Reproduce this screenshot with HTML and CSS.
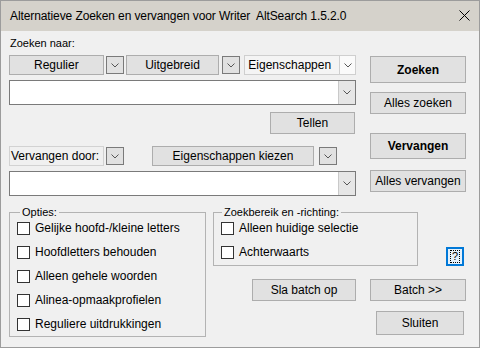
FILE: index.html
```html
<!DOCTYPE html>
<html lang="nl">
<head>
  <meta charset="UTF-8">
  <title>AltSearch</title>
  <link rel="stylesheet" href="styles.css">
</head>
<body>
  <div class="window">
    <div class="titlebar">
      <span class="title">Alternatieve Zoeken en vervangen voor Writer&nbsp; AltSearch 1.5.2.0</span>
      <svg class="close" width="11" height="11" viewBox="0 0 11 11">
        <path d="M0.5 0.5 L10.5 10.5 M10.5 0.5 L0.5 10.5" stroke="#000" stroke-width="1" fill="none"/>
      </svg>
    </div>

    <div class="content">
      <div class="top">
        <div class="left">
          <div class="label">Zoeken naar:</div>

          <div class="row">
            <button class="btn mode">Regulier</button>
            <span class="drop"><svg width="8" height="5" viewBox="0 0 8 5"><polyline points="0.5,0.5 4,4 7.5,0.5" fill="none" stroke="#555"/></svg></span>
            <button class="btn mode mode-ext">Uitgebreid</button>
            <span class="drop drop-ext"><svg width="8" height="5" viewBox="0 0 8 5"><polyline points="0.5,0.5 4,4 7.5,0.5" fill="none" stroke="#555"/></svg></span>
            <div class="prop-combo">
              <span class="prop-text">Eigenschappen</span>
              <span class="prop-arrow"><svg width="8" height="5" viewBox="0 0 8 5"><polyline points="0.5,0.5 4,4 7.5,0.5" fill="none" stroke="#555"/></svg></span>
            </div>
          </div>

          <div class="combo">
            <span class="combo-arrow"><svg width="8" height="5" viewBox="0 0 8 5"><polyline points="0.5,0.5 4,4 7.5,0.5" fill="none" stroke="#555"/></svg></span>
          </div>

          <button class="btn tellen">Tellen</button>

          <div class="row row-replace">
            <span class="replace-label">Vervangen door:</span>
            <span class="drop"><svg width="8" height="5" viewBox="0 0 8 5"><polyline points="0.5,0.5 4,4 7.5,0.5" fill="none" stroke="#555"/></svg></span>
            <button class="btn props">Eigenschappen kiezen</button>
            <span class="drop drop-props"><svg width="8" height="5" viewBox="0 0 8 5"><polyline points="0.5,0.5 4,4 7.5,0.5" fill="none" stroke="#555"/></svg></span>
          </div>

          <div class="combo">
            <span class="combo-arrow"><svg width="8" height="5" viewBox="0 0 8 5"><polyline points="0.5,0.5 4,4 7.5,0.5" fill="none" stroke="#555"/></svg></span>
          </div>
        </div>

        <div class="right">
          <button class="btn big bold">Zoeken</button>
          <button class="btn small all-search">Alles zoeken</button>
          <button class="btn big bold replace">Vervangen</button>
          <button class="btn small all-replace">Alles vervangen</button>
        </div>
      </div>

      <div class="bottom">
        <fieldset class="group options">
          <legend>Opties:</legend>
          <label class="check"><span class="box"></span>Gelijke hoofd-/kleine letters</label>
          <label class="check"><span class="box"></span>Hoofdletters behouden</label>
          <label class="check"><span class="box"></span>Alleen gehele woorden</label>
          <label class="check"><span class="box"></span>Alinea-opmaakprofielen</label>
          <label class="check"><span class="box"></span>Reguliere uitdrukkingen</label>
        </fieldset>

        <div class="rest">
          <div class="rest-top">
            <fieldset class="group range">
              <legend>Zoekbereik en -richting:</legend>
              <label class="check"><span class="box"></span>Alleen huidige selectie</label>
              <label class="check"><span class="box"></span>Achterwaarts</label>
            </fieldset>
            <button class="help"><span class="focus">?</span></button>
          </div>
          <div class="batch-row">
            <button class="btn batch-save">Sla batch op</button>
            <button class="btn batch">Batch &gt;&gt;</button>
          </div>
          <button class="btn close-btn">Sluiten</button>
        </div>
      </div>
    </div>
  </div>
</body>
</html>
```

FILE: styles.css
```css
* {
  box-sizing: border-box;
}

body {
  margin: 0;
  font-family: "Liberation Sans", Arial, sans-serif;
  font-size: 12px;
  color: #000;
}

.window {
  width: 480px;
  height: 348px;
  border: 1px solid #9c9c9c;
  background-color: #f0f0f0;
}

.titlebar {
  height: 30px;
  display: flex;
  align-items: center;
  padding: 0 9px 0 9px;
  background-color: #d5d2cb;
}

.title {
  flex: 1;
  font-size: 12px;
  letter-spacing: -0.1px;
}

.close {
  margin-top: -1px;
}

.content {
  padding: 0 8px;
}

.top {
  display: flex;
}

.left {
  width: 347px;
  display: flex;
  flex-direction: column;
  padding-top: 6px;
}

.label {
  font-size: 11px;
  line-height: 13px;
  padding-left: 1px;
}

.row {
  display: flex;
  align-items: center;
  height: 20px;
  margin-top: 5px;
}

.btn {
  background-color: #e1e1e1;
  border: 1px solid #adadad;
  font-family: inherit;
  font-size: 12px;
  color: #000;
  padding: 0;
}

.mode {
  width: 95px;
  height: 20px;
}

.mode-ext {
  width: 94px;
  margin-left: 2px;
}

.drop {
  width: 18px;
  height: 18px;
  margin-left: 2px;
  display: flex;
  align-items: center;
  justify-content: center;
  background-color: #e1e1e1;
  border: 1px solid #7a7a7a;
}

.drop-ext {
  margin-left: 3px;
}

.prop-combo {
  width: 112px;
  height: 20px;
  margin-left: 4px;
  display: flex;
  border: 1px solid #cfcfcf;
  background-color: #f4f4f4;
}

.prop-text {
  flex: 1;
  line-height: 18px;
  padding-left: 3px;
}

.prop-arrow {
  width: 16px;
  display: flex;
  align-items: center;
  justify-content: center;
  border-left: 1px solid #cfcfcf;
  background-color: #fafafa;
}

.combo {
  height: 25px;
  margin-top: 5px;
  display: flex;
  justify-content: flex-end;
  background-color: #fff;
  border: 1px solid #7a7a7a;
}

.combo-arrow {
  width: 17px;
  display: flex;
  align-items: center;
  justify-content: center;
  background-color: #e6e6e6;
  border-left: 1px solid #c9c9c9;
}

.tellen {
  align-self: flex-end;
  width: 85px;
  height: 22px;
  margin-top: 7px;
  margin-right: 1px;
}

.row-replace {
  margin-top: 12px;
}

.replace-label {
  width: 95px;
  height: 20px;
  line-height: 18px;
  padding-left: 1px;
  border: 1px solid #d2d2d2;
  white-space: nowrap;
}

.props {
  width: 162px;
  height: 20px;
  margin-left: 28px;
}

.drop-props {
  margin-left: 5px;
}

.right {
  width: 96px;
  margin-left: 14px;
  display: flex;
  flex-direction: column;
  padding-top: 25px;
}

.big {
  height: 27px;
}

.small {
  height: 22px;
}

.bold {
  font-weight: bold;
}

.all-search {
  margin-top: 9px;
}

.replace {
  margin-top: 19px;
  height: 26px;
}

.all-replace {
  margin-top: 11px;
}

.bottom {
  display: flex;
  margin-top: 12px;
}

.group {
  margin: 0;
  padding: 0 0 0 7px;
  border: 1px solid #b3b3b3;
}

.group legend {
  font-size: 11px;
  line-height: 8px;
  padding: 0 2px;
}

.options {
  width: 197px;
}

.options legend {
  margin-left: 3px;
}

.check {
  display: flex;
  align-items: center;
  gap: 5px;
  height: 24px;
}

.box {
  width: 13px;
  height: 13px;
  background-color: #fff;
  border: 1px solid #333;
}

.rest {
  margin-left: 7px;
  display: flex;
  flex-direction: column;
}

.rest-top {
  display: flex;
}

.range {
  width: 205px;
}

.range legend {
  margin-left: 1px;
}

.help {
  width: 18px;
  height: 19px;
  margin-left: 28px;
  margin-top: 39px;
  padding: 0;
  display: flex;
  align-items: center;
  justify-content: center;
  background-color: #e5f1fb;
  border: 2px solid #0078d7;
  font-family: inherit;
  font-size: 11px;
}

.focus {
  border: 1px dotted #000;
  line-height: 11px;
  padding: 0 1px;
}

.batch-row {
  display: flex;
  margin-top: 13px;
}

.batch-save {
  width: 104px;
  height: 22px;
  margin-left: 39px;
}

.batch {
  width: 96px;
  height: 22px;
  margin-left: 14px;
}

.close-btn {
  width: 88px;
  height: 24px;
  margin-top: 10px;
  margin-left: 163px;
}
```
